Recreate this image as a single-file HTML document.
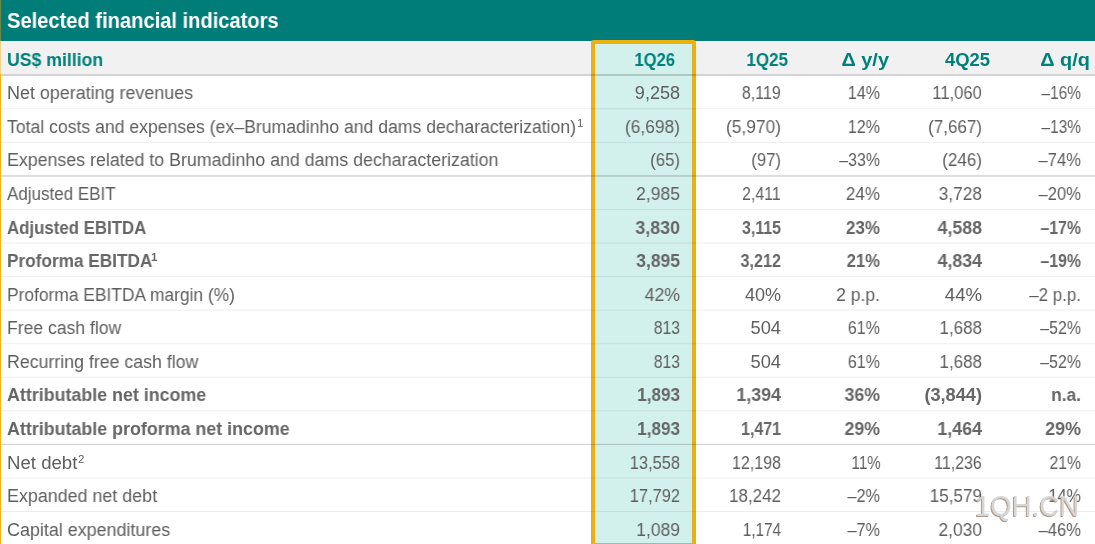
<!DOCTYPE html>
<html><head><meta charset="utf-8">
<style>
*{margin:0;padding:0;box-sizing:border-box}
html,body{width:1095px;height:544px;overflow:hidden;background:#fff}
body{position:relative;font-family:"Liberation Sans",sans-serif;color:#5e5e5e}
.abs{position:absolute}
.t{position:absolute;white-space:nowrap;font-size:18px;line-height:20px;will-change:transform}
.l{transform-origin:0 50%}
.r{transform-origin:100% 50%}
.title{left:0;top:0;width:1095px;height:41px;background:#007d78}
.sub{left:0;top:41px;width:1095px;height:33px;background:#f1f1f1}
.hd{font-weight:bold;color:#00807a}
.box{left:591px;top:40px;width:105px;height:507px;background:#d3f1ec;border:4px solid #edb014;border-radius:3px}
.ln{position:absolute;left:0;width:1095px;height:1px;background:rgba(0,0,0,0.075)}
.b{font-weight:bold;color:#666}
.sp{font-size:11px;line-height:11px;position:absolute}
.wm{position:absolute;white-space:nowrap;font-size:29px;line-height:34px;color:#d6d6d6;text-shadow:-1px 1px 0 #b39a86;transform-origin:0 50%;transform:scaleX(0.95)}
</style></head><body>
<div class="abs title"></div>
<div class="abs sub"></div>
<div class="abs box"></div>

<svg class="abs" style="left:0;top:0" width="1095" height="544" viewBox="0 0 1095 544"><rect x="0" y="74" width="1095" height="2" fill="rgba(0,0,0,0.17)"/><rect x="0" y="108.29" width="1095" height="1" fill="rgba(0,0,0,0.075)"/><rect x="0" y="141.85" width="1095" height="1" fill="rgba(0,0,0,0.075)"/><rect x="0" y="174.91" width="1095" height="2" fill="rgba(0,0,0,0.137)"/><rect x="0" y="208.97" width="1095" height="1" fill="rgba(0,0,0,0.075)"/><rect x="0" y="242.54" width="1095" height="1" fill="rgba(0,0,0,0.075)"/><rect x="0" y="276.10" width="1095" height="1" fill="rgba(0,0,0,0.075)"/><rect x="0" y="309.66" width="1095" height="1" fill="rgba(0,0,0,0.075)"/><rect x="0" y="343.22" width="1095" height="1" fill="rgba(0,0,0,0.075)"/><rect x="0" y="376.78" width="1095" height="1" fill="rgba(0,0,0,0.075)"/><rect x="0" y="410.34" width="1095" height="1" fill="rgba(0,0,0,0.075)"/><rect x="0" y="443.90" width="1095" height="1" fill="rgba(0,0,0,0.2)"/><rect x="0" y="477.46" width="1095" height="1" fill="rgba(0,0,0,0.075)"/><rect x="0" y="511.02" width="1095" height="1" fill="rgba(0,0,0,0.075)"/></svg>
<div id="title" class="t l" style="left:7px;top:5.5px;font-size:22px;line-height:30px;font-weight:bold;color:#fff;transform:scaleX(0.9145)">Selected financial indicators</div>
<div id="hl" class="t l hd" style="left:7px;top:49.8px;transform:scaleX(0.9813)">US$ million</div>
<div id="h0" class="t r hd" style="right:419.8px;top:49.8px;transform:scaleX(0.9214)">1Q26</div>
<div id="h1" class="t r hd" style="right:307.0px;top:49.8px;transform:scaleX(0.9451)">1Q25</div>
<div id="h2" class="t r hd" style="right:206.0px;top:49.8px;transform:scaleX(1.1055)">Δ y/y</div>
<div id="h3" class="t r hd" style="right:105.0px;top:49.8px;transform:scaleX(1.0235)">4Q25</div>
<div id="h4" class="t r hd" style="right:4.6px;top:49.8px;transform:scaleX(1.105)">Δ q/q</div>
<div id="L0" class="t l" style="left:7px;top:83.2px;transform:scaleX(0.9954)">Net operating revenues</div>
<div id="N0_0" class="t r" style="right:415.4px;top:83.2px;transform:scaleX(1.0038)">9,258</div>
<div id="N0_1" class="t r" style="right:314.3px;top:83.2px;transform:scaleX(0.8886)">8,119</div>
<div id="N0_2" class="t r" style="right:214.5px;top:83.2px;transform:scaleX(0.8935)">14%</div>
<div id="N0_3" class="t r" style="right:113.4px;top:83.2px;transform:scaleX(0.9196)">11,060</div>
<div id="N0_4" class="t r" style="right:13.6px;top:83.2px;transform:scaleX(0.8595)">–16%</div>
<div id="L1" class="t l" style="left:7px;top:116.8px;transform:scaleX(0.9789)">Total costs and expenses (ex–Brumadinho and dams decharacterization)</div>
<div id="N1_0" class="t r" style="right:415.4px;top:116.8px;transform:scaleX(0.9666)">(6,698)</div>
<div id="N1_1" class="t r" style="right:314.3px;top:116.8px;transform:scaleX(0.9657)">(5,970)</div>
<div id="N1_2" class="t r" style="right:214.5px;top:116.8px;transform:scaleX(0.8935)">12%</div>
<div id="N1_3" class="t r" style="right:113.4px;top:116.8px;transform:scaleX(0.9451)">(7,667)</div>
<div id="N1_4" class="t r" style="right:13.6px;top:116.8px;transform:scaleX(0.8595)">–13%</div>
<div class="t sup" style="left:577.3px;top:118.1px;font-size:11.5px;line-height:11px">1</div>
<div id="L2" class="t l" style="left:7px;top:150.3px;transform:scaleX(0.9883)">Expenses related to Brumadinho and dams decharacterization</div>
<div id="N2_0" class="t r" style="right:415.4px;top:150.3px;transform:scaleX(0.9309)">(65)</div>
<div id="N2_1" class="t r" style="right:314.3px;top:150.3px;transform:scaleX(0.9277)">(97)</div>
<div id="N2_2" class="t r" style="right:214.5px;top:150.3px;transform:scaleX(0.8853)">–33%</div>
<div id="N2_3" class="t r" style="right:113.4px;top:150.3px;transform:scaleX(0.9475)">(246)</div>
<div id="N2_4" class="t r" style="right:13.6px;top:150.3px;transform:scaleX(0.9247)">–74%</div>
<div id="L3" class="t l" style="left:7px;top:183.9px;transform:scaleX(0.9446)">Adjusted EBIT</div>
<div id="N3_0" class="t r" style="right:415.4px;top:183.9px;transform:scaleX(0.9778)">2,985</div>
<div id="N3_1" class="t r" style="right:314.3px;top:183.9px;transform:scaleX(0.8836)">2,411</div>
<div id="N3_2" class="t r" style="right:214.5px;top:183.9px;transform:scaleX(0.9492)">24%</div>
<div id="N3_3" class="t r" style="right:113.4px;top:183.9px;transform:scaleX(0.9626)">3,728</div>
<div id="N3_4" class="t r" style="right:13.6px;top:183.9px;transform:scaleX(0.9247)">–20%</div>
<div id="L4" class="t l b" style="left:7px;top:217.5px;transform:scaleX(0.9347)">Adjusted EBITDA</div>
<div id="N4_0" class="t r b" style="right:415.4px;top:217.5px;transform:scaleX(0.992)">3,830</div>
<div id="N4_1" class="t r b" style="right:314.3px;top:217.5px;transform:scaleX(0.8864)">3,115</div>
<div id="N4_2" class="t r b" style="right:214.5px;top:217.5px;transform:scaleX(0.9462)">23%</div>
<div id="N4_3" class="t r b" style="right:113.4px;top:217.5px;transform:scaleX(0.987)">4,588</div>
<div id="N4_4" class="t r b" style="right:13.6px;top:217.5px;transform:scaleX(0.8808)">–17%</div>
<div id="L5" class="t l b" style="left:7px;top:251.1px;transform:scaleX(0.9561)">Proforma EBITDA</div>
<div id="N5_0" class="t r b" style="right:415.4px;top:251.1px;transform:scaleX(0.9731)">3,895</div>
<div id="N5_1" class="t r b" style="right:314.3px;top:251.1px;transform:scaleX(0.9008)">3,212</div>
<div id="N5_2" class="t r b" style="right:214.5px;top:251.1px;transform:scaleX(0.9263)">21%</div>
<div id="N5_3" class="t r b" style="right:113.4px;top:251.1px;transform:scaleX(0.9875)">4,834</div>
<div id="N5_4" class="t r b" style="right:13.6px;top:251.1px;transform:scaleX(0.8808)">–19%</div>
<div class="t sup b" style="left:151.3px;top:252.4px;font-size:11.5px;line-height:11px">1</div>
<div id="L6" class="t l" style="left:7px;top:284.6px;transform:scaleX(0.9658)">Proforma EBITDA margin (%)</div>
<div id="N6_0" class="t r" style="right:415.4px;top:284.6px;transform:scaleX(0.9813)">42%</div>
<div id="N6_1" class="t r" style="right:314.3px;top:284.6px;transform:scaleX(1.0008)">40%</div>
<div id="N6_2" class="t r" style="right:214.5px;top:284.6px;transform:scaleX(0.9747)">2 p.p.</div>
<div id="N6_3" class="t r" style="right:113.4px;top:284.6px;transform:scaleX(1.0331)">44%</div>
<div id="N6_4" class="t r" style="right:13.6px;top:284.6px;transform:scaleX(0.9411)">–2 p.p.</div>
<div id="L7" class="t l" style="left:7px;top:318.2px;transform:scaleX(0.9761)">Free cash flow</div>
<div id="N7_0" class="t r" style="right:415.4px;top:318.2px;transform:scaleX(0.8741)">813</div>
<div id="N7_1" class="t r" style="right:314.3px;top:318.2px;transform:scaleX(1.0184)">504</div>
<div id="N7_2" class="t r" style="right:214.5px;top:318.2px;transform:scaleX(0.895)">61%</div>
<div id="N7_3" class="t r" style="right:113.4px;top:318.2px;transform:scaleX(0.9454)">1,688</div>
<div id="N7_4" class="t r" style="right:13.6px;top:318.2px;transform:scaleX(0.8874)">–52%</div>
<div id="L8" class="t l" style="left:7px;top:351.8px;transform:scaleX(0.9863)">Recurring free cash flow</div>
<div id="N8_0" class="t r" style="right:415.4px;top:351.8px;transform:scaleX(0.8741)">813</div>
<div id="N8_1" class="t r" style="right:314.3px;top:351.8px;transform:scaleX(1.0184)">504</div>
<div id="N8_2" class="t r" style="right:214.5px;top:351.8px;transform:scaleX(0.895)">61%</div>
<div id="N8_3" class="t r" style="right:113.4px;top:351.8px;transform:scaleX(0.9454)">1,688</div>
<div id="N8_4" class="t r" style="right:13.6px;top:351.8px;transform:scaleX(0.8874)">–52%</div>
<div id="L9" class="t l b" style="left:7px;top:385.3px;transform:scaleX(0.9911)">Attributable net income</div>
<div id="N9_0" class="t r b" style="right:415.4px;top:385.3px;transform:scaleX(0.9514)">1,893</div>
<div id="N9_1" class="t r b" style="right:314.3px;top:385.3px;transform:scaleX(0.9914)">1,394</div>
<div id="N9_2" class="t r b" style="right:214.5px;top:385.3px;transform:scaleX(0.9841)">36%</div>
<div id="N9_3" class="t r b" style="right:113.4px;top:385.3px;transform:scaleX(1.0108)">(3,844)</div>
<div id="N9_4" class="t r b" style="right:13.6px;top:385.3px;transform:scaleX(0.962)">n.a.</div>
<div id="L10" class="t l b" style="left:7px;top:418.9px;transform:scaleX(0.9916)">Attributable proforma net income</div>
<div id="N10_0" class="t r b" style="right:415.4px;top:418.9px;transform:scaleX(0.9514)">1,893</div>
<div id="N10_1" class="t r b" style="right:314.3px;top:418.9px;transform:scaleX(0.8864)">1,471</div>
<div id="N10_2" class="t r b" style="right:214.5px;top:418.9px;transform:scaleX(0.9841)">29%</div>
<div id="N10_3" class="t r b" style="right:113.4px;top:418.9px;transform:scaleX(0.9919)">1,464</div>
<div id="N10_4" class="t r b" style="right:13.6px;top:418.9px;transform:scaleX(0.9951)">29%</div>
<div id="L11" class="t l" style="left:7px;top:452.5px;transform:scaleX(1.0342)">Net debt</div>
<div id="N11_0" class="t r" style="right:415.4px;top:452.5px;transform:scaleX(0.914)">13,558</div>
<div id="N11_1" class="t r" style="right:314.3px;top:452.5px;transform:scaleX(0.8913)">12,198</div>
<div id="N11_2" class="t r" style="right:214.5px;top:452.5px;transform:scaleX(0.8432)">11%</div>
<div id="N11_3" class="t r" style="right:113.4px;top:452.5px;transform:scaleX(0.8846)">11,236</div>
<div id="N11_4" class="t r" style="right:13.6px;top:452.5px;transform:scaleX(0.8753)">21%</div>
<div class="t sup" style="left:77.5px;top:453.8px;font-size:11.5px;line-height:11px">2</div>
<div id="L12" class="t l" style="left:7px;top:486.0px;transform:scaleX(0.9934)">Expanded net debt</div>
<div id="N12_0" class="t r" style="right:415.4px;top:486.0px;transform:scaleX(0.9137)">17,792</div>
<div id="N12_1" class="t r" style="right:314.3px;top:486.0px;transform:scaleX(0.9457)">18,242</div>
<div id="N12_2" class="t r" style="right:214.5px;top:486.0px;transform:scaleX(0.9036)">–2%</div>
<div id="N12_3" class="t r" style="right:113.4px;top:486.0px;transform:scaleX(0.9514)">15,579</div>
<div id="N12_4" class="t r" style="right:13.6px;top:486.0px;transform:scaleX(0.905)">14%</div>
<div id="L13" class="t l" style="left:7px;top:519.6px;transform:scaleX(0.9953)">Capital expenditures</div>
<div id="N13_0" class="t r" style="right:415.4px;top:519.6px;transform:scaleX(0.9725)">1,089</div>
<div id="N13_1" class="t r" style="right:314.3px;top:519.6px;transform:scaleX(0.8482)">1,174</div>
<div id="N13_2" class="t r" style="right:214.5px;top:519.6px;transform:scaleX(0.9036)">–7%</div>
<div id="N13_3" class="t r" style="right:113.4px;top:519.6px;transform:scaleX(0.9667)">2,030</div>
<div id="N13_4" class="t r" style="right:13.6px;top:519.6px;transform:scaleX(0.9247)">–46%</div>
<div class="abs" style="left:0;top:0;width:1px;height:41px;background:#6a8a4c"></div>
<div class="abs" style="left:0;top:41px;width:1px;height:33px;background:#efd58c"></div>
<div class="abs" style="left:0;top:74px;width:1px;height:470px;background:#efb31c"></div>
<div class="wm" style="left:975px;top:489px">1QH.CN</div>
</body></html>
